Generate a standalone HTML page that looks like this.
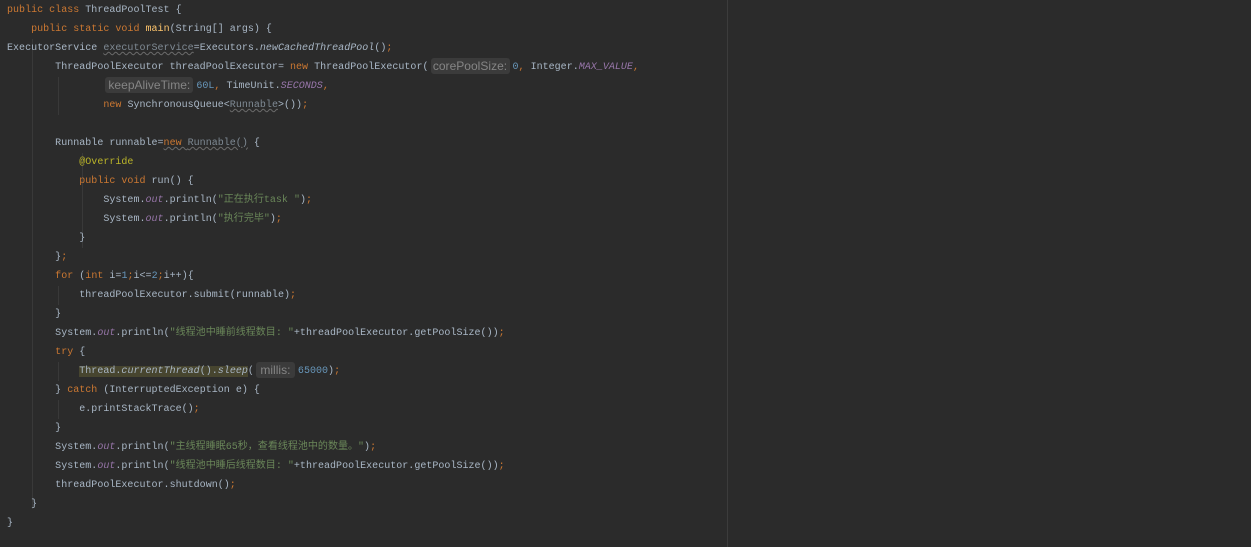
<!DOCTYPE html>
<html><head><meta charset="utf-8"><style>
html,body{margin:0;padding:0;background:#2b2b2b;width:1251px;height:547px;overflow:hidden}
.c{position:absolute;left:7px;top:1px;font-family:"Liberation Mono","Noto Sans CJK SC",monospace;font-size:10px;color:#a9b7c6;letter-spacing:0.02px}
.l{height:19px;line-height:19px;white-space:pre}
.k{color:#cc7832}.s{color:#6a8759}.n{color:#6897bb}.f{color:#9876aa;font-style:italic}.i{font-style:italic}
.a{color:#bbb529}.m{color:#ffc66d}.u{text-decoration:underline wavy #6b6b6b;text-decoration-thickness:1px;color:#7f8a94}
.h{display:inline-block;background:#3b3b3b;color:#858585;font-family:"Liberation Sans",sans-serif;font-size:12px;line-height:16px;border-radius:3px;text-align:center;vertical-align:middle;margin:0 3px 0 2px}
.hl{background:#47452f}
.vl{position:absolute;left:727px;top:0;width:1px;height:547px;background:#3c3c3c}
.g{position:absolute;width:1px;background:#393939}
</style></head><body>
<div class="vl"></div>
<div class="g" style="left:32px;top:39px;height:470px"></div>
<div class="g" style="left:58px;top:77px;height:38px"></div>
<div class="g" style="left:82px;top:153px;height:95px"></div>
<div class="g" style="left:58px;top:286px;height:19px"></div>
<div class="g" style="left:58px;top:362px;height:19px"></div>
<div class="g" style="left:58px;top:400px;height:19px"></div>
<div class="c">
<div class="l"><span class="k">public class </span>ThreadPoolTest {</div>
<div class="l">    <span class="k">public static void </span><span class="m">main</span>(String[] args) {</div>
<div class="l">ExecutorService <span class="u">executorService</span>=Executors.<span class="i">newCachedThreadPool</span>()<span class="k">;</span></div>
<div class="l">        ThreadPoolExecutor threadPoolExecutor= <span class="k">new </span>ThreadPoolExecutor(<span class="h" style="width:79px">corePoolSize:</span><span class="n">0</span><span class="k">, </span>Integer.<span class="f">MAX_VALUE</span><span class="k">,</span></div>
<div class="l">                <span class="h" style="width:88px">keepAliveTime:</span><span class="n">60L</span><span class="k">, </span>TimeUnit.<span class="f">SECONDS</span><span class="k">,</span></div>
<div class="l">                <span class="k">new </span>SynchronousQueue&lt;<span class="u">Runnable</span>&gt;())<span class="k">;</span></div>
<div class="l"> </div>
<div class="l">        Runnable runnable=<span class="u"><span class="k">new </span>Runnable()</span> {</div>
<div class="l">            <span class="a">@Override</span></div>
<div class="l">            <span class="k">public void </span>run() {</div>
<div class="l">                System.<span class="f">out</span>.println(<span class="s">"正在执行task "</span>)<span class="k">;</span></div>
<div class="l">                System.<span class="f">out</span>.println(<span class="s">"执行完毕"</span>)<span class="k">;</span></div>
<div class="l">            }</div>
<div class="l">        }<span class="k">;</span></div>
<div class="l">        <span class="k">for </span>(<span class="k">int </span>i=<span class="n">1</span><span class="k">;</span>i&lt;=<span class="n">2</span><span class="k">;</span>i++){</div>
<div class="l">            threadPoolExecutor.submit(runnable)<span class="k">;</span></div>
<div class="l">        }</div>
<div class="l">        System.<span class="f">out</span>.println(<span class="s">"线程池中睡前线程数目: "</span>+threadPoolExecutor.getPoolSize())<span class="k">;</span></div>
<div class="l">        <span class="k">try </span>{</div>
<div class="l">            <span class="hl">Thread.<span class="i">currentThread</span>().<span class="i">sleep</span></span>(<span class="h" style="width:39px">millis:</span><span class="n">65000</span>)<span class="k">;</span></div>
<div class="l">        } <span class="k">catch </span>(InterruptedException e) {</div>
<div class="l">            e.printStackTrace()<span class="k">;</span></div>
<div class="l">        }</div>
<div class="l">        System.<span class="f">out</span>.println(<span class="s">"主线程睡眠65秒，查看线程池中的数量。"</span>)<span class="k">;</span></div>
<div class="l">        System.<span class="f">out</span>.println(<span class="s">"线程池中睡后线程数目: "</span>+threadPoolExecutor.getPoolSize())<span class="k">;</span></div>
<div class="l">        threadPoolExecutor.shutdown()<span class="k">;</span></div>
<div class="l">    }</div>
<div class="l">}</div>
</div>
</body></html>
